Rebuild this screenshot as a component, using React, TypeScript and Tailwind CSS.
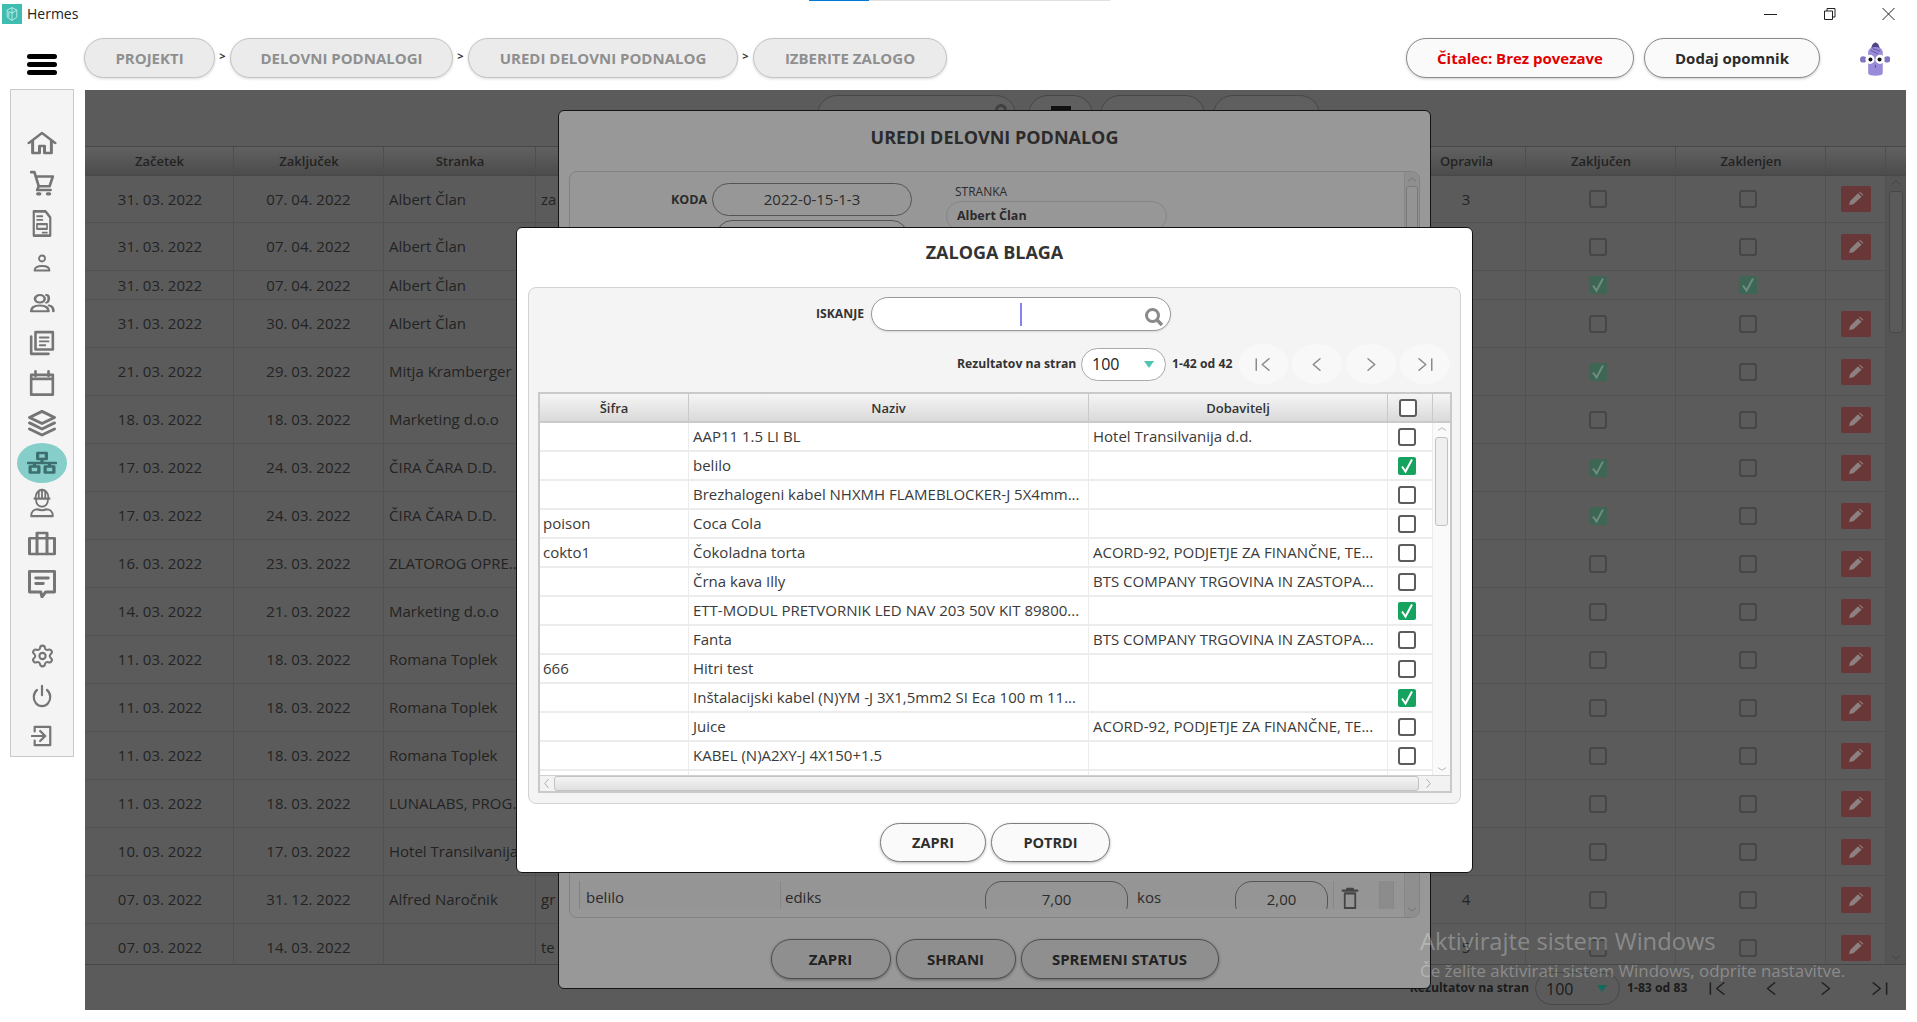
import { Settings } from "lucide-react";
import type { ReactNode } from "react";

// ---- icons -------------------------------------------------------------

function Ic({ cls, children, sw = 2.4 }: { cls: string; children: ReactNode; sw?: number }) {
  return (
    <svg
      viewBox="0 0 24 24"
      preserveAspectRatio="none"
      className={cls}
      fill="none"
      stroke="currentColor"
      strokeWidth={sw}
      strokeLinecap="round"
      strokeLinejoin="round"
    >
      {children}
    </svg>
  );
}

function Check() {
  return (
    <svg viewBox="0 0 18 18" className="w-full h-full" fill="none" stroke="currentColor" strokeWidth={2}>
      <path d="M4 9.5l3.5 5L14 2.5" />
    </svg>
  );
}

function ModalBox({ on }: { on?: boolean }) {
  if (on) {
    return (
      <div className="w-[18px] h-[18px] rounded-[2px] bg-[#16a35f] text-white">
        <Check />
      </div>
    );
  }
  return <div className="w-[18px] h-[18px] rounded-[3px] border-2 border-[#5c5c5c] bg-white" />;
}

function DimBox({ on }: { on?: boolean }) {
  if (on) {
    return (
      <div className="w-[18px] h-[18px] rounded-[2px] bg-[#3e6655] text-[#6f8c80]">
        <Check />
      </div>
    );
  }
  return <div className="w-[18px] h-[18px] rounded-[3px] border-2 border-[#464646]" />;
}

function Pencil() {
  return (
    <svg viewBox="0 0 24 24" preserveAspectRatio="none" className="w-[17px] h-[16px]" fill="#8d8080">
      <path d="M3 21l1.5-6L15.5 3.5l5 5L9 20z" />
      <path d="M17 2l1.5-1 4.5 4.5-1 1.5z" />
    </svg>
  );
}

function PagerIcon({ k, cls }: { k: number; cls: string }) {
  return (
    <Ic cls={cls} sw={2}>
      {k === 0 && <path d="M3 4v16M20 4l-9 8 9 8" />}
      {k === 1 && <path d="M16 4l-9 8 9 8" />}
      {k === 2 && <path d="M8 4l9 8-9 8" />}
      {k === 3 && <path d="M4 4l9 8-9 8M21 4v16" />}
    </Ic>
  );
}

function Mascot() {
  return (
    <svg viewBox="0 0 33 38" className="w-[30px] h-[37px]">
      <path d="M14 3l3-2 3 2 2 5H12z" fill="#4d4486" />
      <path d="M9 12q0-5 8-6 8 1 8 6v23q0 3-8 3t-8-3z" fill="#9a8bd8" />
      <circle cx="3.5" cy="20" r="3.5" fill="#8576c4" />
      <circle cx="30" cy="20" r="3.5" fill="#8576c4" />
      <circle cx="11" cy="20" r="5" fill="#fff" />
      <circle cx="22" cy="20" r="5" fill="#fff" />
      <circle cx="11.5" cy="20" r="2.2" fill="#111" />
      <circle cx="21.5" cy="20" r="2.2" fill="#111" />
      <path d="M12 10l8 4M14 8l8 3" stroke="#5e54a0" strokeWidth={1} />
      <path d="M17 26v3" stroke="#4d4486" strokeWidth={1} />
    </svg>
  );
}

const navIcons: ReactNode[] = [
  <Ic cls="w-[30px] h-[24px]">
    <path d="M1.5 12L12 2l10.5 10" />
    <path d="M4.5 10v12h5.5v-7h4v7h5.5V10" />
  </Ic>,
  <Ic cls="w-[26px] h-[26px]">
    <path d="M2 2h3l4 13h10l3-9H6" />
    <path d="M9 15l-1.5 3.5H20" />
    <path d="M8 22h2M17 22h2" strokeWidth={3} />
  </Ic>,
  <Ic cls="w-[22px] h-[29px]">
    <path d="M3 2h13l5 5v15H3z" />
    <path d="M6.5 6h6M6.5 9h6" strokeWidth={1.5} />
    <path d="M6.5 12.5h11v4h-11z" strokeWidth={1.8} />
    <path d="M12.5 19.5h5" strokeWidth={1.5} />
  </Ic>,
  <Ic cls="w-[18px] h-[18px]">
    <circle cx="12" cy="6" r="4" />
    <path d="M2 22c0-4 4-6 10-6s10 2 10 6z" />
  </Ic>,
  <Ic cls="w-[26px] h-[20px]">
    <circle cx="10" cy="7" r="4.5" />
    <path d="M2 22c0-5 3-7 8-7s8 2 8 7z" />
    <path d="M16 2.5c3 0 3 8 0 9M18.5 15c2.5.5 4 3 4 7" />
  </Ic>,
  <Ic cls="w-[26px] h-[26px]">
    <path d="M6 2h16v16H6z" />
    <path d="M2 6v16h16" />
    <path d="M10 7h8M10 10.5h8M10 14h5" strokeWidth={1.8} />
  </Ic>,
  <Ic cls="w-[26px] h-[28px]">
    <path d="M2 5h20v17H2z" />
    <path d="M2 8.5h20" />
    <path d="M6 2v4M18 2v4" />
  </Ic>,
  <Ic cls="w-[30px] h-[29px]">
    <path d="M12 2L2 7l10 5 10-5z" />
    <path d="M2 11.5l10 5 10-5" />
    <path d="M2 16.5l10 5 10-5" />
  </Ic>,
  <div className="w-[50px] h-[40px] rounded-[50%] bg-[#85cec9] flex items-center justify-center text-[#3d6f70]">
    <Ic cls="w-[30px] h-[24px]" sw={2.6}>
      <path d="M8.5 2h7v6h-7z" />
      <path d="M12 8v4M1 12h22M6 12v3M18 12v3" />
      <path d="M2.5 15.5h7v6h-7zM14.5 15.5h7v6h-7z" />
    </Ic>
  </div>,
  <Ic cls="w-[26px] h-[30px]" sw={1.7}>
    <path d="M6 8c0-4 3-6.5 6-6.5S18 4 18 8" />
    <path d="M12 1.5v6M9 3v5M15 3v5M5 8.5h14" />
    <path d="M6.5 9c0 3.5 2 6 5.5 6s5.5-2.5 5.5-6" />
    <path d="M2 22.5c0-4 3-5.5 6-5.5 1.5 1 6.5 1 8 0 3 0 6 1.5 6 5.5z" />
  </Ic>,
  <Ic cls="w-[30px] h-[25px]">
    <path d="M2 7h20v15H2z" />
    <path d="M8 7V2h8v5M8 7v15M16 7v15" />
  </Ic>,
  <Ic cls="w-[30px] h-[29px]">
    <path d="M2 2h20v17h-7l-3 4-1-4H2z" />
    <path d="M7 7.5h10M7 12h6" />
  </Ic>,
];

// ---- base table --------------------------------------------------------

type Row = {
  from: string;
  to: string;
  client: string;
  note?: string;
  tasks?: string;
  done?: boolean;
  locked?: boolean;
  noEdit?: boolean;
  h: string;
};

const rows: Row[] = [
  { from: "31. 03. 2022", to: "07. 04. 2022", client: "Albert Član", note: "za", tasks: "3", h: "h-[47px]" },
  { from: "31. 03. 2022", to: "07. 04. 2022", client: "Albert Član", h: "h-[48px]" },
  { from: "31. 03. 2022", to: "07. 04. 2022", client: "Albert Član", done: true, locked: true, noEdit: true, h: "h-[29px]" },
  { from: "31. 03. 2022", to: "30. 04. 2022", client: "Albert Član", h: "h-[48px]" },
  { from: "21. 03. 2022", to: "29. 03. 2022", client: "Mitja Kramberger", done: true, h: "h-[48px]" },
  { from: "18. 03. 2022", to: "18. 03. 2022", client: "Marketing d.o.o", h: "h-[48px]" },
  { from: "17. 03. 2022", to: "24. 03. 2022", client: "ČIRA ČARA D.D.", done: true, h: "h-[48px]" },
  { from: "17. 03. 2022", to: "24. 03. 2022", client: "ČIRA ČARA D.D.", done: true, h: "h-[48px]" },
  { from: "16. 03. 2022", to: "23. 03. 2022", client: "ZLATOROG OPRE...", h: "h-[48px]" },
  { from: "14. 03. 2022", to: "21. 03. 2022", client: "Marketing d.o.o", h: "h-[48px]" },
  { from: "11. 03. 2022", to: "18. 03. 2022", client: "Romana Toplek", h: "h-[48px]" },
  { from: "11. 03. 2022", to: "18. 03. 2022", client: "Romana Toplek", h: "h-[48px]" },
  { from: "11. 03. 2022", to: "18. 03. 2022", client: "Romana Toplek", h: "h-[48px]" },
  { from: "11. 03. 2022", to: "18. 03. 2022", client: "LUNALABS, PROG...", h: "h-[48px]" },
  { from: "10. 03. 2022", to: "17. 03. 2022", client: "Hotel Transilvanija", h: "h-[48px]" },
  { from: "07. 03. 2022", to: "31. 12. 2022", client: "Alfred Naročnik", note: "gr", tasks: "4", h: "h-[48px]" },
  { from: "07. 03. 2022", to: "14. 03. 2022", client: "", note: "te", tasks: "5", h: "h-[48px]" },
];

const baseCols = "grid grid-cols-[149px_150px_152px_871px_119px_150px_150px_60px]";

function BasePage() {
  return (
    <div className="flex-1 h-[920px] mr-[11px] bg-[#5b5b5b] flex flex-col text-[#232323]">
      <div className="h-[56px] pl-[732px] pt-[5px] flex shrink-0">
        <div className="w-[199px] h-[40px] rounded-[20px] border border-[#474747] bg-[#5f5f5f] flex justify-end pr-[8px] pt-[8px]">
          <div className="w-[12px] h-[12px] rounded-full border-[3px] border-[#3f3f3f]" />
        </div>
        <div className="w-[65px] h-[40px] ml-[12px] rounded-[20px] border border-[#474747] bg-[#5f5f5f] flex justify-center pt-[10px]">
          <div className="w-[20px] h-[5px] bg-[#111]" />
        </div>
        <div className="w-[105px] h-[40px] ml-[7px] rounded-[20px] border border-[#474747] bg-[#5f5f5f]" />
        <div className="w-[107px] h-[40px] ml-[8px] rounded-[20px] border border-[#474747] bg-[#5f5f5f]" />
      </div>

      <div className="flex h-[819px] shrink-0 border-b border-[#474747] overflow-hidden">
        <div className="w-[1801px] shrink-0">
          <div className={`${baseCols} h-[30px] bg-gradient-to-b from-[#616161] to-[#4c4c4c] border-y border-[#484848] text-[13px] font-semibold`}>
            {["Začetek", "Zaključek", "Stranka", "", "Opravila", "Zaključen", "Zaklenjen", ""].map((t, i) => (
              <div key={i} className="flex items-center justify-center pt-[2px] pl-[1px] border-r border-[#4e4e4e]">
                {t}
              </div>
            ))}
          </div>
          {rows.map((r, i) => (
            <div key={i} className={`${baseCols} ${r.h} border-b border-[#525252] text-[15px]`}>
              <div className="flex items-center justify-center pl-[2px] border-r border-[#525252]">{r.from}</div>
              <div className="flex items-center justify-center border-r border-[#525252]">{r.to}</div>
              <div className="flex items-center pl-[5px] border-r border-[#525252] overflow-hidden whitespace-nowrap">{r.client}</div>
              <div className="flex items-center pl-[5px] border-r border-[#525252]">{r.note}</div>
              <div className="flex items-center justify-center border-r border-[#525252]">{r.tasks}</div>
              <div className="flex items-center justify-center pr-[6px] border-r border-[#525252]">
                <DimBox on={r.done} />
              </div>
              <div className="flex items-center justify-center pr-[6px] border-r border-[#525252]">
                <DimBox on={r.locked} />
              </div>
              <div className="flex items-center justify-center border-r border-[#525252]">
                {!r.noEdit && (
                  <div className="w-[30px] h-[26px] rounded-[2px] bg-[#693737] flex items-center justify-center">
                    <Pencil />
                  </div>
                )}
              </div>
            </div>
          ))}
        </div>
        <div className="flex-1 flex flex-col bg-[#555]">
          <div className="h-[30px] shrink-0 bg-gradient-to-b from-[#616161] to-[#4c4c4c] border-y border-[#484848]" />
          <div className="flex-1 flex flex-col items-center text-[#3f3f3f] pt-[3px] pb-[3px]">
            <Ic cls="w-[10px] h-[7px]" sw={2}>
              <path d="M3 17l9-10 9 10" />
            </Ic>
            <div className="w-[14px] h-[142px] mt-[5px] rounded-[3px] border border-[#474747] bg-[#5a5a5a]" />
            <div className="flex-1" />
            <Ic cls="w-[10px] h-[7px]" sw={2}>
              <path d="M3 7l9 10 9-10" />
            </Ic>
          </div>
        </div>
      </div>

      <div className="flex-1 flex items-start text-[#1c1c1c]">
        <div className="ml-auto flex items-center mt-[7px] pr-[17px]">
          <span className="text-[12.2px] font-bold mr-[6px]">Rezultatov na stran</span>
          <div className="w-[85px] h-[33px] rounded-[17px] border border-[#474747] flex items-center pl-[10px] pr-[12px] text-[16px]">
            100
            <span className="ml-auto w-0 h-0 border-x-[5px] border-x-transparent border-t-[7px] border-t-[#126b5d]" />
          </div>
          <span className="text-[12.2px] font-bold w-[59px] ml-[7px] whitespace-nowrap">1-83 od 83</span>
          <div className="flex ml-[22px] gap-[35px] text-[#222]">
            {[0, 1, 2, 3].map((k) => (
              <PagerIcon key={k} k={k} cls="w-[19px] h-[17px]" />
            ))}
          </div>
        </div>
      </div>
    </div>
  );
}

// ---- edit modal behind -------------------------------------------------

function EditModal() {
  const pill = "rounded-[20px] border border-[#4f4f4f] bg-[#8f8f8f] shadow-[0_1px_3px_rgba(0,0,0,0.35)] flex items-center justify-center h-[40px] text-[15px] font-bold text-[#222]";
  return (
    <div className="absolute left-[558px] top-[110px] w-[873px] h-[879px] rounded-[6px] border border-[#141414] bg-[#989898] flex flex-col text-[#2b2b2b]">
      <div className="h-[60px] shrink-0 pb-[8px] flex items-center justify-center text-[18px] font-bold">UREDI DELOVNI PODNALOG</div>
      <div className="mx-[10px] h-[747px] shrink-0 rounded-[8px] border border-[#828282] bg-[#979797] flex overflow-hidden">
        <div className="flex-1 flex flex-col justify-between">
          <div className="flex pt-[11px] pl-[101px] h-[80px]">
            <span className="text-[12.5px] font-bold mt-[8px] w-[41px]">KODA</span>
            <div className="flex flex-col gap-[4px]">
              <div className="w-[200px] h-[34px] rounded-[17px] border border-[#555] flex items-center justify-center text-[15px]">2022-0-15-1-3</div>
              <div className="w-[192px] h-[34px] ml-[4px] rounded-[17px] border border-[#555]" />
            </div>
            <div className="ml-[34px]">
              <div className="text-[12px] ml-[9px] leading-[18px]">STRANKA</div>
              <div className="w-[221px] h-[30px] rounded-[15px] border border-[#858585] pl-[10px] flex items-center text-[12.5px] font-bold">Albert Član</div>
            </div>
          </div>
          <div className="mb-[8px] ml-[9px] h-[28px] flex border-l border-[#828282] text-[15px] overflow-hidden bg-[#959595]">
            <div className="w-[201px] pl-[6px] pt-[5px] border-r border-[#878787]">belilo</div>
            <div className="w-[204px] pl-[4px] pt-[5px]">ediks</div>
            <div className="w-[143px] h-[40px] rounded-[17px] border border-[#555] text-center pt-[6px]">7,00</div>
            <div className="w-[107px] pl-[9px] pt-[5px]">kos</div>
            <div className="w-[93px] h-[40px] rounded-[17px] border border-[#555] text-center pt-[6px]">2,00</div>
            <div className="w-[46px] ml-[5px] flex justify-center pr-[14px] pt-[6px] text-[#444] border-l border-[#878787]">
              <Ic cls="w-[18px] h-[22px]">
                <path d="M2 4h20M8 3V2h8v1" />
                <path d="M5 7h14v16H5z" />
              </Ic>
            </div>
            <div className="w-[15px] border-x border-[#878787] bg-[#8c8c8c]" />
          </div>
        </div>
        <div className="w-[15px] border-l border-[#878787] bg-[#8f8f8f] flex flex-col items-center justify-between py-[4px] text-[#6b6b6b]">
          <div className="flex flex-col items-center">
            <Ic cls="w-[10px] h-[7px]" sw={2}>
              <path d="M3 17l9-10 9 10" />
            </Ic>
            <div className="w-[12px] h-[100px] mt-[3px] rounded-[3px] border border-[#7a7a7a] bg-[#949494]" />
          </div>
          <Ic cls="w-[10px] h-[7px]" sw={2}>
            <path d="M3 7l9 10 9-10" />
          </Ic>
        </div>
      </div>
      <div className="flex justify-center gap-[5px] pt-[21px]">
        <div className={`${pill} w-[120px]`}>ZAPRI</div>
        <div className={`${pill} w-[120px]`}>SHRANI</div>
        <div className={`${pill} w-[198px]`}>SPREMENI STATUS</div>
      </div>
    </div>
  );
}

// ---- stock modal -------------------------------------------------------

type Stock = { code?: string; name: string; supplier?: string; on?: boolean };

const stock: Stock[] = [
  { name: "AAP11 1.5 LI BL", supplier: "Hotel Transilvanija d.d." },
  { name: "belilo", on: true },
  { name: "Brezhalogeni kabel NHXMH FLAMEBLOCKER-J 5X4mm..." },
  { code: "poison", name: "Coca Cola" },
  { code: "cokto1", name: "Čokoladna torta", supplier: "ACORD-92, PODJETJE ZA FINANČNE, TE..." },
  { name: "Črna kava Illy", supplier: "BTS COMPANY TRGOVINA IN ZASTOPA..." },
  { name: "ETT-MODUL PRETVORNIK LED NAV 203 50V KIT 89800...", on: true },
  { name: "Fanta", supplier: "BTS COMPANY TRGOVINA IN ZASTOPA..." },
  { code: "666", name: "Hitri test" },
  { name: "Inštalacijski kabel (N)YM -J 3X1,5mm2 SI Eca 100 m 11...", on: true },
  { name: "Juice", supplier: "ACORD-92, PODJETJE ZA FINANČNE, TE..." },
  { name: "KABEL (N)A2XY-J 4X150+1.5" },
];

const stockCols = "grid grid-cols-[149px_400px_299px_45px]";

function StockModal() {
  const btn = "h-[39px] rounded-[20px] border border-[#7d7d7d] bg-[#fafafa] shadow-[0_1px_3px_rgba(0,0,0,0.3)] flex items-center justify-center text-[14.5px] font-bold text-[#2f2f2f]";
  return (
    <div className="absolute left-[516px] top-[227px] w-[957px] h-[646px] rounded-[6px] border border-[#111] bg-white flex flex-col text-[#3a3a3a]">
      <div className="h-[59px] shrink-0 pb-[11px] flex items-center justify-center text-[18px] font-bold text-[#333]">ZALOGA BLAGA</div>
      <div className="mx-[11px] h-[517px] shrink-0 rounded-[8px] border border-[#d2d2d2] bg-[#f4f4f4] px-[9px] flex flex-col">
        <div className="flex items-center h-[34px] mt-[9px] pl-[278px]">
          <span className="text-[12.2px] font-bold text-[#333] w-[55px]">ISKANJE</span>
          <div className="w-[300px] h-[34px] rounded-[17px] border border-[#999] bg-white relative flex items-center justify-center shadow-[0_1px_2px_rgba(0,0,0,0.12)]">
            <div className="w-[2px] h-[23px] bg-[#8585ee]" />
            <div className="absolute right-[6px] top-[9px] text-[#8a8a8a]">
              <svg viewBox="0 0 20 20" className="w-[20px] h-[20px]" fill="none" stroke="currentColor">
                <circle cx="8.5" cy="8.5" r="6" strokeWidth={3} />
                <path d="M13 13l5 5" strokeWidth={3.5} />
              </svg>
            </div>
          </div>
        </div>
        <div className="flex items-center h-[40px] mt-[13px] pl-[419px]">
          <span className="text-[12.2px] font-bold text-[#333] w-[124px]">Rezultatov na stran</span>
          <div className="w-[85px] h-[33px] rounded-[17px] border border-[#aaa] bg-white flex items-center pl-[10px] pr-[11px] text-[16px] text-[#222]">
            100
            <span className="ml-auto w-0 h-0 border-x-[5px] border-x-transparent border-t-[7px] border-t-[#4fc4b0]" />
          </div>
          <span className="text-[12.2px] font-bold text-[#333] ml-[6px] w-[66px] whitespace-nowrap">1-42 od 42</span>
          <div className="flex gap-[4px] text-[#8a8a8a]">
            {[0, 1, 2, 3].map((k) => (
              <div key={k} className="w-[50px] h-[40px] rounded-[50%] bg-[#f8f8f8] flex items-center justify-center">
                <PagerIcon k={k} cls="w-[18px] h-[17px]" />
              </div>
            ))}
          </div>
        </div>

        <div className="mt-[8px] h-[401px] w-[914px] border-2 border-[#c9c9c9] bg-white flex flex-col overflow-hidden">
          <div className={`${stockCols} h-[29px] shrink-0 bg-gradient-to-b from-[#f5f5f5] to-[#dadada] border-b-2 border-[#cacaca] text-[13px] font-semibold text-[#333]`}>
            {["Šifra", "Naziv", "Dobavitelj"].map((t) => (
              <div key={t} className="flex items-center justify-center pt-[2px] border-r border-[#c9c9c9]">
                {t}
              </div>
            ))}
            <div className="flex items-center pl-[11px] border-r border-[#c9c9c9]">
              <ModalBox />
            </div>
          </div>
          <div className="flex h-[352px] shrink-0">
            <div className="w-[893px] overflow-hidden">
              {stock.map((s) => (
                <div key={s.name} className={`${stockCols} h-[29px] border-b-2 border-[#ececec] text-[15px]`}>
                  <div className="flex items-center pl-[3px] border-r border-[#ececec]">{s.code}</div>
                  <div className="flex items-center pl-[4px] border-r border-[#ececec] whitespace-nowrap overflow-hidden">{s.name}</div>
                  <div className="flex items-center pl-[4px] border-r border-[#ececec] whitespace-nowrap overflow-hidden">{s.supplier}</div>
                  <div className="flex items-center pl-[10px] border-r border-[#ececec]">
                    <ModalBox on={s.on} />
                  </div>
                </div>
              ))}
              <div className={`${stockCols} h-[4px]`}>
                <div className="border-r border-[#ececec]" />
                <div className="border-r border-[#ececec]" />
                <div className="border-r border-[#ececec]" />
                <div className="border-r border-[#ececec]" />
              </div>
            </div>
            <div className="flex-1 flex flex-col items-center justify-between pt-[3px] pb-[3px] text-[#9a9a9a] bg-[#fafafa]">
              <div className="flex flex-col items-center">
                <Ic cls="w-[10px] h-[6px]" sw={2}>
                  <path d="M3 17l9-10 9 10" />
                </Ic>
                <div className="w-[13px] h-[89px] mt-[5px] rounded-[3px] border border-[#c2c2c2] bg-[#efefef]" />
              </div>
              <Ic cls="w-[10px] h-[6px]" sw={2}>
                <path d="M3 7l9 10 9-10" />
              </Ic>
            </div>
          </div>
          <div className="flex-1 flex items-center px-[3px] border-t border-[#d0d0d0] bg-[#f2f2f2] text-[#9a9a9a]">
            <Ic cls="w-[7px] h-[11px]" sw={2}>
              <path d="M18 3L6 12l12 9" />
            </Ic>
            <div className="w-[865px] ml-[4px] h-[15px] rounded-[3px] border border-[#c2c2c2] bg-gradient-to-b from-[#f4f4f4] to-[#e0e0e0]" />
            <Ic cls="w-[7px] h-[11px] ml-[6px]" sw={2}>
              <path d="M6 3l12 9-12 9" />
            </Ic>
          </div>
        </div>
      </div>
      <div className="flex justify-center gap-[5px] pt-[19px] pl-[1px]">
        <div className={`${btn} w-[106px]`}>ZAPRI</div>
        <div className={`${btn} w-[119px]`}>POTRDI</div>
      </div>
    </div>
  );
}

// ---- page --------------------------------------------------------------

export default function App() {
  const crumb = "h-[40px] rounded-[20px] border border-[#c4c4c4] bg-[#ebebeb] shadow-[0_1px_3px_rgba(0,0,0,0.15)] flex items-center justify-center text-[15px] font-bold text-[#8f8f8f] whitespace-nowrap";
  const sep = "w-[15px] text-center text-[11px] font-bold text-[#333] leading-[36px]";
  const topBtn = "h-[40px] rounded-[20px] border border-[#8a8a8a] bg-[#fafafa] shadow-[0_1px_3px_rgba(0,0,0,0.2)] flex items-center justify-center text-[15px] font-bold";

  return (
    <div className="relative w-[1917px] h-[1022px] overflow-hidden bg-white font-['Open_Sans','Noto_Sans',sans-serif]">
      {/* title bar */}
      <div className="relative h-[38px] flex text-[#222]">
        <div className="absolute left-[809px] top-0 w-[301px] h-px bg-[#e0e0e0]">
          <div className="w-[60px] h-px bg-[#0078d7]" />
        </div>
        <div className="ml-[2px] mt-[4px] w-[20px] h-[20px] bg-[#3fbdb0] text-[#d5f3ef] flex items-center justify-center">
          <svg viewBox="0 0 20 20" className="w-[16px] h-[16px]" fill="none" stroke="currentColor" strokeWidth={1}>
            <path d="M10 2l6 3v9l-6 4-6-4V5zM10 2v16M10 9l6-4M10 9L6 7v7" />
          </svg>
        </div>
        <span className="ml-[5px] mt-[4px] text-[14px] leading-[20px]">Hermes</span>
        <div className="ml-auto flex items-start mt-[8px] mr-[22px] gap-[46px]">
          <svg viewBox="0 0 13 12" className="w-[13px] h-[12px]" fill="none" stroke="currentColor">
            <path d="M0 6.5h13" />
          </svg>
          <svg viewBox="0 0 13 12" className="w-[13px] h-[12px]" fill="none" stroke="currentColor">
            <path d="M1.5 3h8v8.5h-8zM4 3V.5h8v8.5H9.5" />
          </svg>
          <svg viewBox="0 0 13 12" className="w-[13px] h-[12px]" fill="none" stroke="currentColor">
            <path d="M.5 0l12 12M12.5 0L.5 12" />
          </svg>
        </div>
      </div>

      {/* breadcrumb */}
      <div className="h-[52px] flex items-start">
        <div className="w-[84px] flex justify-center pt-[16px]">
          <div className="w-[30px] flex flex-col gap-[3px]">
            <div className="h-[5px] rounded-full bg-black" />
            <div className="h-[5px] rounded-full bg-black" />
            <div className="h-[5px] rounded-full bg-black" />
          </div>
        </div>
        <div className={`${crumb} w-[131px]`}>PROJEKTI</div>
        <span className={sep}>&gt;</span>
        <div className={`${crumb} w-[223px]`}>DELOVNI PODNALOGI</div>
        <span className={sep}>&gt;</span>
        <div className={`${crumb} w-[270px]`}>UREDI DELOVNI PODNALOG</div>
        <span className={sep}>&gt;</span>
        <div className={`${crumb} w-[194px]`}>IZBERITE ZALOGO</div>
        <div className="ml-auto flex items-start mr-[27px]">
          <div className={`${topBtn} w-[228px] text-[#e00000]`}>Čitalec: Brez povezave</div>
          <div className={`${topBtn} w-[176px] ml-[10px] text-[#2b2b2b]`}>Dodaj opomnik</div>
          <div className="ml-[40px] mt-[2px]">
            <Mascot />
          </div>
        </div>
      </div>

      <div className="flex">
        {/* side menu */}
        <div className="w-[64px] h-[668px] ml-[10px] mr-[11px] -mt-px border border-[#c9c9c9] bg-[#f4f4f4] flex flex-col items-center pt-[33px] text-[#757575] shrink-0">
          {navIcons.map((n, i) => (
            <div key={i} className="h-[40px] flex items-center justify-center">
              {n}
            </div>
          ))}
          <div className="h-[33px]" />
          <div className="h-[40px] flex items-center">
            <Settings className="w-[25px] h-[26px]" />
          </div>
          <div className="h-[40px] flex items-center">
            <Ic cls="w-[22px] h-[24px]">
              <path d="M12 2v9" />
              <path d="M6.5 6a9 9 0 1 0 11 0" />
            </Ic>
          </div>
          <div className="h-[40px] flex items-center">
            <Ic cls="w-[22px] h-[22px]">
              <path d="M4 7V2h17v20H4v-5" />
              <path d="M1 12h14M10 6.5l5.5 5.5-5.5 5.5" />
            </Ic>
          </div>
        </div>

        <BasePage />
      </div>

      <EditModal />
      <StockModal />

      {/* windows watermark */}
      <div className="absolute left-[1420px] top-[923px] text-white/30 pointer-events-none whitespace-nowrap">
        <div className="text-[23.7px] leading-[36px]">Aktivirajte sistem Windows</div>
        <div className="text-[16.9px] leading-[24px]">Če želite aktivirati sistem Windows, odprite nastavitve.</div>
      </div>
    </div>
  );
}
